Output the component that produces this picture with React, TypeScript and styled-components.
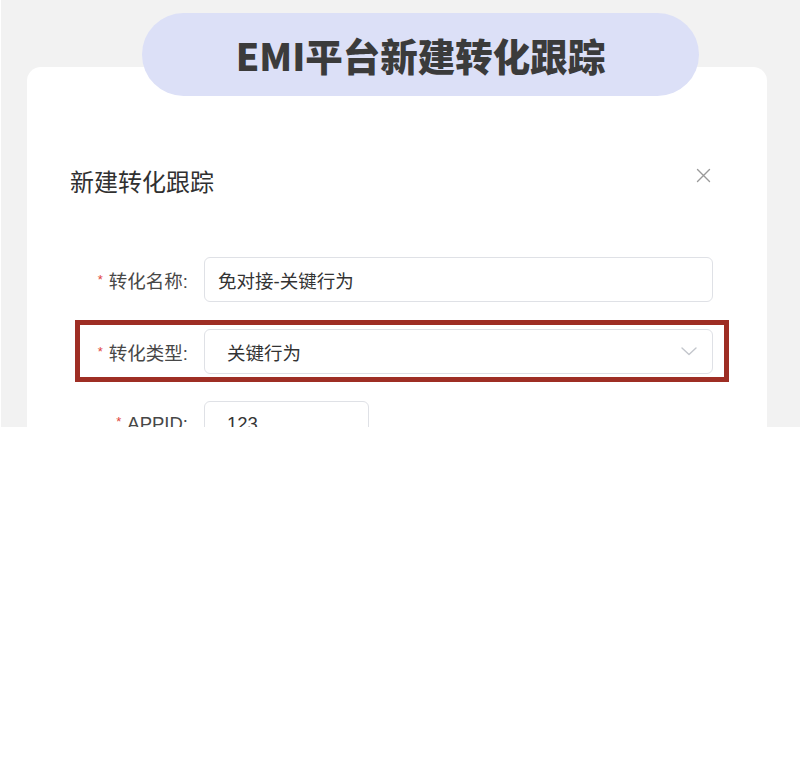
import React from "react";
import styled, { createGlobalStyle } from "styled-components";

const GlobalStyle = createGlobalStyle`
  html, body {
    margin: 0;
    padding: 0;
    background: #ffffff;
  }
  *, *::before, *::after {
    box-sizing: border-box;
  }
`;

const Viewport = styled.div`
  margin-left: 1px;
  height: 427px;
  overflow: hidden;
  background: #f2f2f2;
  font-family: "Liberation Sans", "Noto Sans CJK SC", sans-serif;
`;

const Stage = styled.div`
  display: flex;
  flex-direction: column;
  padding-top: 13px;
`;

const Banner = styled.div`
  position: relative;
  z-index: 1;
  align-self: flex-start;
  margin-left: 141px;
  width: 557px;
  height: 83px;
  border-radius: 42px;
  background: #dce0f7;
  display: flex;
  align-items: center;
  justify-content: center;
`;

const BannerTitle = styled.h1`
  margin: 0;
  font-family: "Noto Sans CJK SC", sans-serif;
  font-weight: 900;
  font-size: 37.5px;
  letter-spacing: 0;
  color: #3b3b3b;
  line-height: 1;
`;

const Card = styled.section`
  margin-top: -29px;
  margin-left: 26px;
  width: 740px;
  min-height: 500px;
  background: #ffffff;
  border-radius: 14px;
  padding: 90px 54px 0 43px;
`;

const Header = styled.header`
  display: flex;
  align-items: center;
  justify-content: space-between;
  height: 48px;
`;

const DialogTitle = styled.h2`
  margin: 0;
  font-family: "Noto Sans CJK SC", sans-serif;
  font-weight: 400;
  font-size: 24px;
  color: #303030;
  line-height: 1;
`;

const CloseButton = styled.button`
  width: 20px;
  height: 20px;
  margin-bottom: 12px;
  padding: 0;
  border: none;
  background: transparent;
  display: flex;
  align-items: center;
  justify-content: center;
  color: #9a9a9a;
`;

const Form = styled.form`
  margin-top: 52px;
  display: flex;
  flex-direction: column;
  gap: 27px;
`;

const Row = styled.div<{ $highlight?: boolean }>`
  position: relative;
  display: flex;
  align-items: center;
  height: 45px;

  &::after {
    content: "";
    display: ${(p) => (p.$highlight ? "block" : "none")};
    position: absolute;
    left: 5px;
    top: -9px;
    width: 654px;
    height: 62px;
    border: 5px solid #9e2e24;
    pointer-events: none;
  }
`;

const Label = styled.label`
  width: 118px;
  flex: none;
  text-align: right;
  font-size: 18.5px;
  color: #474747;
  white-space: nowrap;
`;

const Required = styled.span`
  display: inline-block;
  font-family: "Liberation Sans", sans-serif;
  font-size: 13px;
  color: #e0453c;
  margin-right: 6px;
  transform: translateY(-4px);
`;

const Field = styled.div<{ $width: number; $inset: number }>`
  margin-left: 16px;
  width: ${(p) => p.$width}px;
  height: 45px;
  border: 1.5px solid #dfe1e6;
  border-radius: 6px;
  display: flex;
  align-items: center;
  justify-content: space-between;
  padding: 0 15px 0 ${(p) => p.$inset}px;
  font-size: 18.5px;
  color: #333333;
  background: #ffffff;
`;

const FieldText = styled.span`
  white-space: nowrap;
`;

const Chevron = () => (
  <svg width="16" height="9" viewBox="0 0 16 9" fill="none">
    <path d="M1 1l7 6.5L15 1" stroke="#c3c6cc" strokeWidth="1.4" strokeLinecap="round" strokeLinejoin="round" />
  </svg>
);

const CloseIcon = () => (
  <svg width="15" height="15" viewBox="0 0 15 15" fill="none">
    <path d="M1.5 1.5l12 12M13.5 1.5l-12 12" stroke="currentColor" strokeWidth="1.4" strokeLinecap="round" />
  </svg>
);

export default function App() {
  return (
    <>
      <GlobalStyle />
      <Viewport>
        <Stage>
          <Banner>
            <BannerTitle>EMI平台新建转化跟踪</BannerTitle>
          </Banner>
          <Card>
            <Header>
              <DialogTitle>新建转化跟踪</DialogTitle>
              <CloseButton type="button" aria-label="关闭">
                <CloseIcon />
              </CloseButton>
            </Header>
            <Form>
              <Row>
                <Label>
                  <Required>*</Required>转化名称:
                </Label>
                <Field $width={509} $inset={13}>
                  <FieldText>免对接-关键行为</FieldText>
                </Field>
              </Row>
              <Row $highlight>
                <Label>
                  <Required>*</Required>转化类型:
                </Label>
                <Field $width={509} $inset={22}>
                  <FieldText>关键行为</FieldText>
                  <Chevron />
                </Field>
              </Row>
              <Row>
                <Label>
                  <Required>*</Required>APPID:
                </Label>
                <Field $width={165} $inset={22}>
                  <FieldText>123</FieldText>
                </Field>
              </Row>
            </Form>
          </Card>
        </Stage>
      </Viewport>
    </>
  );
}
